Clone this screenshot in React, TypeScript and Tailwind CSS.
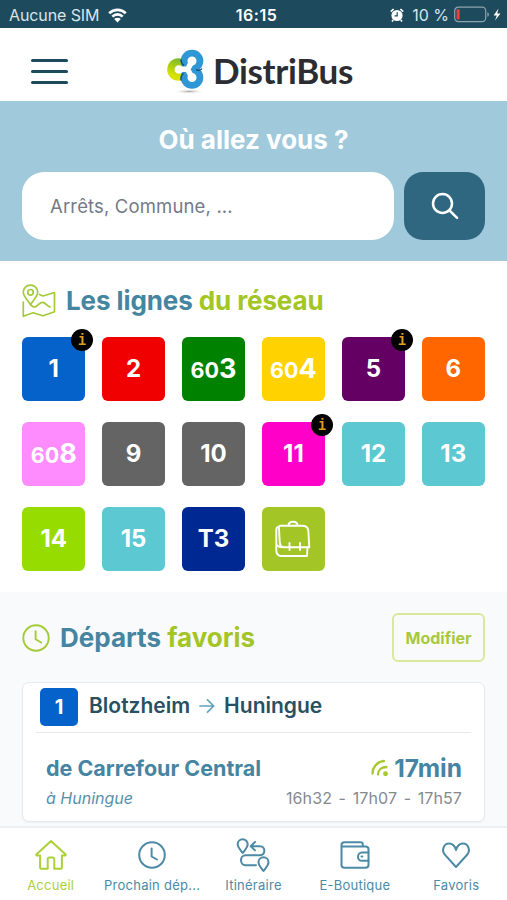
import React from "react";

type Line = { label: string; color: string; info?: boolean; small?: string };

const lines: Line[] = [
  { label: "1", color: "bg-[#0562cb]", info: true },
  { label: "2", color: "bg-[#f00000]" },
  { label: "3", small: "60", color: "bg-[#008200]" },
  { label: "4", small: "60", color: "bg-[#ffd200]" },
  { label: "5", color: "bg-[#640064]", info: true },
  { label: "6", color: "bg-[#ff6600]" },
  { label: "8", small: "60", color: "bg-[#ff8cff]" },
  { label: "9", color: "bg-[#646464]" },
  { label: "10", color: "bg-[#646464]" },
  { label: "11", color: "bg-[#ff00c8]", info: true },
  { label: "12", color: "bg-[#5bc8d2]" },
  { label: "13", color: "bg-[#5bc8d2]" },
  { label: "14", color: "bg-[#96dc00]" },
  { label: "15", color: "bg-[#5bc8d2]" },
  { label: "T3", color: "bg-[#002892]" },
];

const ClockIcon: React.FC<{ className?: string }> = ({ className }) => (
  <svg viewBox="0 0 28 28" className={className} fill="none" stroke="currentColor" strokeWidth="1.9" strokeLinecap="round" strokeLinejoin="round">
    <circle cx="14" cy="14" r="12.7" />
    <path d="M13.6 7.2v8.1l5.6 3.2" />
  </svg>
);

const StatusBar: React.FC = () => (
  <div className="grid h-7 grid-cols-3 items-center bg-[#1d4a5d] pr-[6px] pl-[9px] text-[16px] text-[#d9e4ea]">
    <div className="flex items-center gap-[9px] pt-[2px]">
      <span className="tracking-[-0.1px] whitespace-nowrap">Aucune SIM</span>
      <svg width="19" height="15" viewBox="0 0 19 15" fill="none" stroke="#fff" strokeWidth="2.7">
        <path d="M1.2 5.3a11.8 11.8 0 0 1 16.6 0" />
        <path d="M4.3 8.6a7.4 7.4 0 0 1 10.4 0" />
        <path d="M9.5 14.4 6.2 11a4.7 4.7 0 0 1 6.6 0z" fill="#fff" stroke="none" />
      </svg>
    </div>
    <div className="pt-[2px] pl-[3px] text-center text-[16px] font-semibold tracking-[0.5px] text-white">16:15</div>
    <div className="flex items-center justify-end pt-[1px]">
      <svg width="14" height="14" viewBox="0 0 14 14" className="mr-[8px]">
        <circle cx="7" cy="7.5" r="5.6" fill="#fff" />
        <path d="M.8 3.6 3.6 1M13.2 3.6 10.4 1M3.2 12l-1.2 1.5M10.8 12l1.2 1.5" stroke="#fff" strokeWidth="1.7" />
        <path d="M7.2 4.2v3.6H4.6" stroke="#1d4a5d" strokeWidth="1.2" fill="none" />
      </svg>
      <span className="mr-[5px] pt-[1px] whitespace-nowrap">10 %</span>
      <svg width="47" height="17" viewBox="0 0 47 17">
        <rect x=".7" y="1.2" width="31" height="14.4" rx="3.6" fill="none" stroke="#8da4ae" strokeWidth="1.2" />
        <rect x="2.6" y="3.2" width="3" height="10.4" rx="1" fill="#f23d3d" />
        <path d="M33.4 6.2c2 .5 2 4 0 4.5z" fill="#8da4ae" />
        <path d="M44.5 2.6 39.6 9.5h3.2L41 14.600l5.5-7.200h-3.300z" fill="#fff" />
      </svg>
    </div>
  </div>
);

const Logo: React.FC = () => (
  <div className="flex items-center">
    <svg width="40" height="46" viewBox="0 0 40 46">
      <defs>
        <linearGradient id="leaf" x1="0.7" y1="0" x2="0.3" y2="1">
          <stop offset="0" stopColor="#6fb52c" />
          <stop offset="0.8" stopColor="#d8e100" />
        </linearGradient>
        <radialGradient id="shade">
          <stop offset="0" stopColor="#aaa" />
          <stop offset="1" stopColor="#fff" stopOpacity="0" />
        </radialGradient>
      </defs>
      <ellipse cx="23" cy="42.5" rx="16" ry="2.5" fill="url(#shade)" />
      <circle cx="12.5" cy="20.5" r="11.3" fill="url(#leaf)" />
      <circle cx="26" cy="28.500" r="11.300" fill="#2f97d5" />
      <circle cx="26" cy="12" r="11.300" fill="#2f97d5" />
      <path d="M15 10.500c0 2.500 1 4.500 3 6M15 31.500c-.5-3 .5-5.500 2.500-7M30 20.500c2.500 1.500 5 .8 6-1" stroke="#16486b" strokeWidth="1.300" fill="none" />
      <g stroke="#fff" strokeWidth="5.500" fill="#fff">
        <path d="M21.500 20.300 26 12.300M21.500 20.300 26 28.500M21.500 20.300H13" />
        <circle cx="26" cy="12" r="1.800" />
        <circle cx="26" cy="28.500" r="1.800" />
        <circle cx="12.800" cy="20.500" r="1.500" />
      </g>
    </svg>
    <span className="-mt-[3px] ml-[7px] text-[35px] leading-none font-bold tracking-[-0.35px] text-[#2b2d33] [font-family:Lato,sans-serif]">DistriBus</span>
  </div>
);

const Header: React.FC = () => (
  <header className="flex h-[73px] items-center pl-[31px]">
    <button aria-label="Menu" className="flex w-[37px] flex-col gap-[8px] pt-[13px]">
      <span className="h-[3px] w-full rounded-full bg-[#1d4a5d]" />
      <span className="h-[3px] w-full rounded-full bg-[#1d4a5d]" />
      <span className="h-[3px] w-full rounded-full bg-[#1d4a5d]" />
    </button>
    <div className="ml-[98px] pt-[14px]">
      <Logo />
    </div>
  </header>
);

const Search: React.FC = () => (
  <section className="h-[160px] bg-[#a0cadb] px-[22px] pt-[23px]">
    <h1 className="text-center text-[26px] leading-8 font-bold text-white">Où allez vous ?</h1>
    <div className="mt-4 flex gap-[10px]">
      <input
        placeholder="Arrêts, Commune, ..."
        className="h-[68px] min-w-0 flex-1 rounded-[22px] bg-white px-7 text-[18.5px] tracking-[0.15px] text-[#747a86] placeholder:text-[#747a86]"
      />
      <button aria-label="Rechercher" className="flex h-[68px] w-[81px] items-center justify-center rounded-[19px] bg-[#2f6781]">
        <svg width="28" height="28" viewBox="0 0 28 28" fill="none" stroke="#fff" strokeWidth="2.5" strokeLinecap="round">
          <circle cx="11.5" cy="11.5" r="9.5" />
          <path d="m18.5 18.5 7.6 7.3" />
        </svg>
      </button>
    </div>
  </section>
);

const Network: React.FC = () => (
  <section className="h-[331px] px-[22px] pt-[20px]">
    <div className="flex h-10 items-center gap-[10px]">
      <svg width="34" height="34" viewBox="0 0 34 34" fill="none" stroke="#a5ca37" strokeWidth="1.7" strokeLinecap="round" strokeLinejoin="round">
        <path d="M8.5 20.5C5.5 16 1.3 12.3 1.3 8.3a7.2 7.2 0 0 1 14.4 0c0 4-4.2 7.7-7.2 12.200z" />
        <circle cx="8.5" cy="8.3" r="2.8" />
        <path d="M17.5 10.500 21 12l11.500-3.500v19.300L21 31.800l-10-3-9.700 3.500V18M8.500 20.500l2.500 2.300c3.500 1.500 5-3.600 9-4.400 3.500-.6 4 3.200 8 4.600" />
      </svg>
      <h2 className="text-[26px] leading-8 font-bold tracking-[-0.1px] text-[#4585a2]">
        Les lignes <span className="text-[#a3c626]">du réseau</span>
      </h2>
    </div>
    <div className="mt-4 grid grid-cols-6 gap-x-[16.5px] gap-y-[21px]">
      {lines.map((line) => (
        <div key={line.label} className={`relative flex h-16 items-center justify-center rounded-[6px] text-2xl font-bold text-white ${line.color}`}>
          {line.small ? (
            <span className="flex items-baseline">
              <span className="text-[21.5px]">{line.small}</span>
              <span className="text-[27px]">{line.label}</span>
            </span>
          ) : (
            line.label
          )}
          {line.info && (
            <span className="absolute -top-[8px] -right-[8px] flex size-[22px] items-center justify-center rounded-full bg-black text-[17px] leading-none font-bold text-[#d9a020] [font-family:'Liberation_Mono',monospace]">
              <span className="scale-x-80">i</span>
            </span>
          )}
        </div>
      ))}
      <div className="flex h-16 items-center justify-center rounded-[6px] bg-[#a3c626]">
        <svg width="36" height="38" viewBox="0 0 36 38" fill="none" stroke="#fff" strokeWidth="1.9" strokeLinecap="round" strokeLinejoin="round">
          <path d="M13.5 5.500c0-5 9-5 9 0M5 5.700h22c4.500 0 6 1.600 6.300 5l1 16.500H9c-3 0-4-1.500-4.200-4L4 9c-.1-2 0-3.300 1-3.300z" />
          <path d="M3.5 7C1.8 7 1.3 8 1.3 10v20c0 4 1.5 6 5 6H32l.5-8.500M1.5 24.500c1 1.800 2.500 2.600 6 2.700M14.500 23v7M25 23v7" />
        </svg>
      </div>
    </div>
  </section>
);

const Departures: React.FC = () => (
  <section className="h-[234px] bg-[#f9fafc] px-[22px] pt-[21px]">
    <div className="flex h-[49px] items-center">
      <ClockIcon className="size-[28px] text-[#a5ca37]" />
      <h2 className="ml-[10px] flex-1 text-[26px] leading-8 font-bold text-[#4585a2]">
        Départs <span className="text-[#a3c626]">favoris</span>
      </h2>
      <button className="h-[49px] w-[93px] rounded-[6px] border-2 border-[#d9e99b] text-[16px] font-bold text-[#a9c93c]">Modifier</button>
    </div>
    <article className="mt-5 h-[140px] rounded-[7px] border border-[#e6eaed] bg-white px-[13px] pt-[5px] shadow-xs">
      <div className="flex h-[45px] border-b border-[#e6eaed] pl-1">
        <span className="flex size-[38px] items-center justify-center rounded-[5px] bg-[#0562cb] text-xl font-bold text-white">1</span>
        <p className="ml-[11px] flex h-[35px] items-center text-[21px] font-semibold text-[#275063]">
          Blotzheim
          <svg width="16" height="16" viewBox="0 0 16 16" className="mx-[9px]" fill="none" stroke="#64a2bc" strokeWidth="1.7" strokeLinecap="round" strokeLinejoin="round">
            <path d="M1 8h13.5M8.5 1.8 14.7 8l-6.2 6.200" />
          </svg>
          Huningue
        </p>
      </div>
      <div className="mt-[19px] flex h-8 items-center justify-between pr-[9px] pl-[10px] font-bold text-[#4585a2]">
        <span className="text-[21.5px]">de Carrefour Central</span>
        <span className="flex items-center text-[24.5px]">
          <svg width="18" height="18" viewBox="0 0 18 18" className="mr-[5px]" fill="none" stroke="#a7c82e" strokeWidth="2.3" strokeLinecap="round">
            <path d="M1.5 14.500A12.500 12.500 0 0 1 13 2M7 15.500C7 11 10.500 8 15.500 8" />
            <circle cx="14.5" cy="14.8" r="1.3" fill="#a7c82e" />
          </svg>
          17min
        </span>
      </div>
      <div className="flex h-7 items-center justify-between pr-[9px] pl-[10px] text-[16px]">
        <em className="text-[#5590ab]">à Huningue</em>
        <span className="tracking-[0.1px] text-[#85898f] [word-spacing:2px]">16h32 - 17h07 - 17h57</span>
      </div>
    </article>
  </section>
);

const tabs: { label: string; icon: React.ReactNode; active?: boolean }[] = [
  {
    label: "Accueil",
    active: true,
    icon: <path d="M16 2 1.3 15.500c-.3.7.2 1 .9 1h2.900v12c0 .8.4 1.200 1.200 1.200h6.400V20c0-1 .4-1.500 1.300-1.500h4c.9 0 1.300.5 1.300 1.500v9.700h6.400c.8 0 1.200-.4 1.200-1.200v-12h2.900c.7 0 1.200-.3.9-1z" />,
  },
  {
    label: "Prochain dép...",
    icon: (
      <>
        <circle cx="16" cy="16" r="12.8" />
        <path d="M15.6 9.500v8l5.400 3" />
      </>
    ),
  },
  {
    label: "Itinéraire",
    icon: (
      <>
        <path d="M5.700 14C3.500 10.800.7 8.500.7 5.300a5 5 0 0 1 10 0c0 3.200-2.800 5.500-5 8.700z" />
        <path d="M26.500 32c-2.200-3.200-5-5.500-5-8.700a5 5 0 0 1 10 0c0 3.200-2.800 5.500-5 8.700z" />
        <path d="M18 3l-4.300 4.200 4.300 4.200M14 7.200h9c5.800 0 5.800 9 0 9H8.500c-6 0-6 10 0 10H19" />
      </>
    ),
  },
  {
    label: "E-Boutique",
    icon: (
      <>
        <path d="M4 7.500h22.500c2 0 3 .8 3 2.500v16c0 1.700-1 2.800-3 2.800H5.500c-2 0-3-1-3-2.800V6c0-2 1-2.800 3-2.800h16.300c1.500 0 2 .7 2 2.200v2" />
        <path d="M29.500 13.500H23c-5.300 0-5.300 8.300 0 8.300h6.500M22.500 17.600h.8" />
      </>
    ),
  },
  {
    label: "Favoris",
    icon: <path d="M16 28 5.300 16.200C1 11.500 3.600 4.500 9 4.500c3.300 0 5.700 2 7 6.500 1.300-4.500 3.700-6.500 7-6.500 5.400 0 8 7 3.700 11.700z" />,
  },
];

const TabBar: React.FC = () => (
  <nav className="grid h-[74px] grid-cols-5 border-t-2 border-[#eceff0] bg-white pt-[11px]">
    {tabs.map((tab) => (
      <a key={tab.label} href="#" className={`flex flex-col items-center ${tab.active ? "text-[#abd03a]" : "text-[#4c8aa6]"}`}>
        <svg width="32" height="32" viewBox="0 0 32 32" className="overflow-visible" fill="none" stroke="currentColor" strokeWidth="2" strokeLinecap="round" strokeLinejoin="round">
          {tab.icon}
        </svg>
        <span className="mt-[4px] text-[13px] leading-5 tracking-[0.25px] whitespace-nowrap">{tab.label}</span>
      </a>
    ))}
  </nav>
);

const App: React.FC = () => {
  return (
    <main className="h-[900px] w-full overflow-hidden bg-white [font-family:Inter,sans-serif]">
      <StatusBar />
      <Header />
      <Search />
      <Network />
      <Departures />
      <TabBar />
    </main>
  );
};

export default App;
